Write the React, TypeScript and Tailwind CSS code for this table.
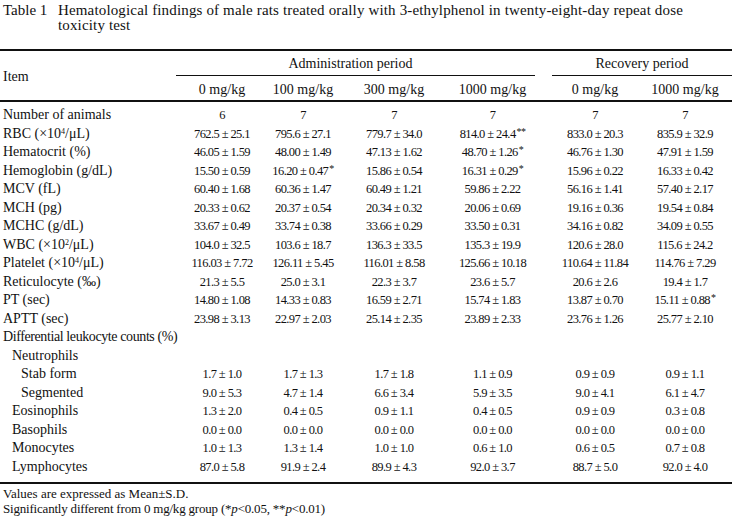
import React from "react"

type Row = {
  label: React.ReactNode
  indent?: 0 | 1 | 2
  values?: React.ReactNode[]
}

const Sig = ({ n }: { n: number }) => (
  <span className="relative top-[-3px] ml-[1px] text-[10px] leading-none">{"*".repeat(n)}</span>
)

const Mu = () => <i className="not-italic">μ</i>

const rows: Row[] = [
  { label: "Number of animals", values: ["6", "7", "7", "7", "7", "7"] },
  {
    label: (
      <>
        RBC (×10<sup className="text-[8px]">4</sup>/<Mu />L)
      </>
    ),
    values: ["762.5 ± 25.1", "795.6 ± 27.1", "779.7 ± 34.0", <>814.0 ± 24.4<Sig n={2} /></>, "833.0 ± 20.3", "835.9 ± 32.9"],
  },
  { label: "Hematocrit (%)", values: ["46.05 ± 1.59", "48.00 ± 1.49", "47.13 ± 1.62", <>48.70 ± 1.26<Sig n={1} /></>, "46.76 ± 1.30", "47.91 ± 1.59"] },
  { label: "Hemoglobin (g/dL)", values: ["15.50 ± 0.59", <>16.20 ± 0.47<Sig n={1} /></>, "15.86 ± 0.54", <>16.31 ± 0.29<Sig n={1} /></>, "15.96 ± 0.22", "16.33 ± 0.42"] },
  { label: "MCV (fL)", values: ["60.40 ± 1.68", "60.36 ± 1.47", "60.49 ± 1.21", "59.86 ± 2.22", "56.16 ± 1.41", "57.40 ± 2.17"] },
  { label: "MCH (pg)", values: ["20.33 ± 0.62", "20.37 ± 0.54", "20.34 ± 0.32", "20.06 ± 0.69", "19.16 ± 0.36", "19.54 ± 0.84"] },
  { label: "MCHC (g/dL)", values: ["33.67 ± 0.49", "33.74 ± 0.38", "33.66 ± 0.29", "33.50 ± 0.31", "34.16 ± 0.82", "34.09 ± 0.55"] },
  {
    label: (
      <>
        WBC (×10<sup className="text-[8px]">2</sup>/<Mu />L)
      </>
    ),
    values: ["104.0 ± 32.5", "103.6 ± 18.7", "136.3 ± 33.5", "135.3 ± 19.9", "120.6 ± 28.0", "115.6 ± 24.2"],
  },
  {
    label: (
      <>
        Platelet (×10<sup className="text-[8px]">4</sup>/<Mu />L)
      </>
    ),
    values: ["116.03 ± 7.72", "126.11 ± 5.45", "116.01 ± 8.58", "125.66 ± 10.18", "110.64 ± 11.84", "114.76 ± 7.29"],
  },
  { label: "Reticulocyte (‰)", values: ["21.3 ± 5.5", "25.0 ± 3.1", "22.3 ± 3.7", "23.6 ± 5.7", "20.6 ± 2.6", "19.4 ± 1.7"] },
  { label: "PT (sec)", values: ["14.80 ± 1.08", "14.33 ± 0.83", "16.59 ± 2.71", "15.74 ± 1.83", "13.87 ± 0.70", <>15.11 ± 0.88<Sig n={1} /></>] },
  { label: "APTT (sec)", values: ["23.98 ± 3.13", "22.97 ± 2.03", "25.14 ± 2.35", "23.89 ± 2.33", "23.76 ± 1.26", "25.77 ± 2.10"] },
  { label: <span className="tracking-[-0.4px]">Differential leukocyte counts (%)</span> },
  { label: "Neutrophils", indent: 1 },
  { label: "Stab form", indent: 2, values: ["1.7 ± 1.0", "1.7 ± 1.3", "1.7 ± 1.8", "1.1 ± 0.9", "0.9 ± 0.9", "0.9 ± 1.1"] },
  { label: "Segmented", indent: 2, values: ["9.0 ± 5.3", "4.7 ± 1.4", "6.6 ± 3.4", "5.9 ± 3.5", "9.0 ± 4.1", "6.1 ± 4.7"] },
  { label: "Eosinophils", indent: 1, values: ["1.3 ± 2.0", "0.4 ± 0.5", "0.9 ± 1.1", "0.4 ± 0.5", "0.9 ± 0.9", "0.3 ± 0.8"] },
  { label: "Basophils", indent: 1, values: ["0.0 ± 0.0", "0.0 ± 0.0", "0.0 ± 0.0", "0.0 ± 0.0", "0.0 ± 0.0", "0.0 ± 0.0"] },
  { label: "Monocytes", indent: 1, values: ["1.0 ± 1.3", "1.3 ± 1.4", "1.0 ± 1.0", "0.6 ± 1.0", "0.6 ± 0.5", "0.7 ± 0.8"] },
  { label: "Lymphocytes", indent: 1, values: ["87.0 ± 5.8", "91.9 ± 2.4", "89.9 ± 4.3", "92.0 ± 3.7", "88.7 ± 5.0", "92.0 ± 4.0"] },
]

const grid = "grid grid-cols-[176px_92px_70px_112px_85px_17px_86px_1fr]"

const Cell = ({ children }: { children?: React.ReactNode }) => (
  <div className="text-center whitespace-nowrap text-[12.5px] tracking-[-0.6px]">{children}</div>
)

const Dose = ({ children }: { children: React.ReactNode }) => (
  <div className="h-[24px] pt-[3px] text-center whitespace-nowrap">{children}</div>
)

export default function App() {
  return (
    <div className="w-[732px] h-[516px] bg-white text-[#111] font-['Liberation_Serif',serif] text-[14px] overflow-hidden">
      {/* caption */}
      <div className="flex pt-[3px] pl-[3px] leading-[15px] text-[15px]">
        <div className="w-[55px] shrink-0">Table 1</div>
        <div className="tracking-[0.15px]">
          <div className="whitespace-nowrap">
            Hematological findings of male rats treated orally with 3-ethylphenol in twenty-eight-day repeat dose
          </div>
          <div>toxicity test</div>
        </div>
      </div>

      {/* header */}
      <div className={`${grid} mt-[16px] border-t-2 border-b-2 border-[#111]`}>
        <div className="row-span-2 pl-[3px] pt-[2px] self-center">Item</div>
        <div className="col-span-4 h-[25px] pt-[2px] pr-[10px] text-center border-b border-[#111]">Administration period</div>
        <div />
        <div className="col-span-2 h-[25px] pt-[2px] text-center border-b border-[#111]">Recovery period</div>
        <div className="col-start-2"><Dose>0 mg/kg</Dose></div>
        <Dose>100 mg/kg</Dose>
        <Dose>300 mg/kg</Dose>
        <Dose>1000 mg/kg</Dose>
        <div className="col-start-7"><Dose>0 mg/kg</Dose></div>
        <Dose>1000 mg/kg</Dose>
      </div>

      {/* body */}
      <div className="pt-[4px] pb-[6px] border-b-2 border-[#111]">
        {rows.map((r, i) => {
          const v = r.values ?? []
          return (
            <div key={i} className={`${grid} h-[18.5px] items-center leading-[18px]`}>
              <div
                className={`whitespace-nowrap ${
                  r.indent === 2 ? "pl-[21px]" : r.indent === 1 ? "pl-[12px]" : "pl-[3px]"
                }`}
              >
                {r.label}
              </div>
              <Cell>{v[0]}</Cell>
              <Cell>{v[1]}</Cell>
              <Cell>{v[2]}</Cell>
              <Cell>{v[3]}</Cell>
              <div />
              <Cell>{v[4]}</Cell>
              <Cell>{v[5]}</Cell>
            </div>
          )
        })}
      </div>

      {/* notes */}
      <div className="pt-[2px] pl-[3px] leading-[15px] text-[13px]">
        <div>Values are expressed as Mean±S.D.</div>
        <div className="tracking-[-0.2px]">
          Significantly different from 0 mg/kg group (*<i>p</i>&lt;0.05, **<i>p</i>&lt;0.01)
        </div>
      </div>
    </div>
  )
}
